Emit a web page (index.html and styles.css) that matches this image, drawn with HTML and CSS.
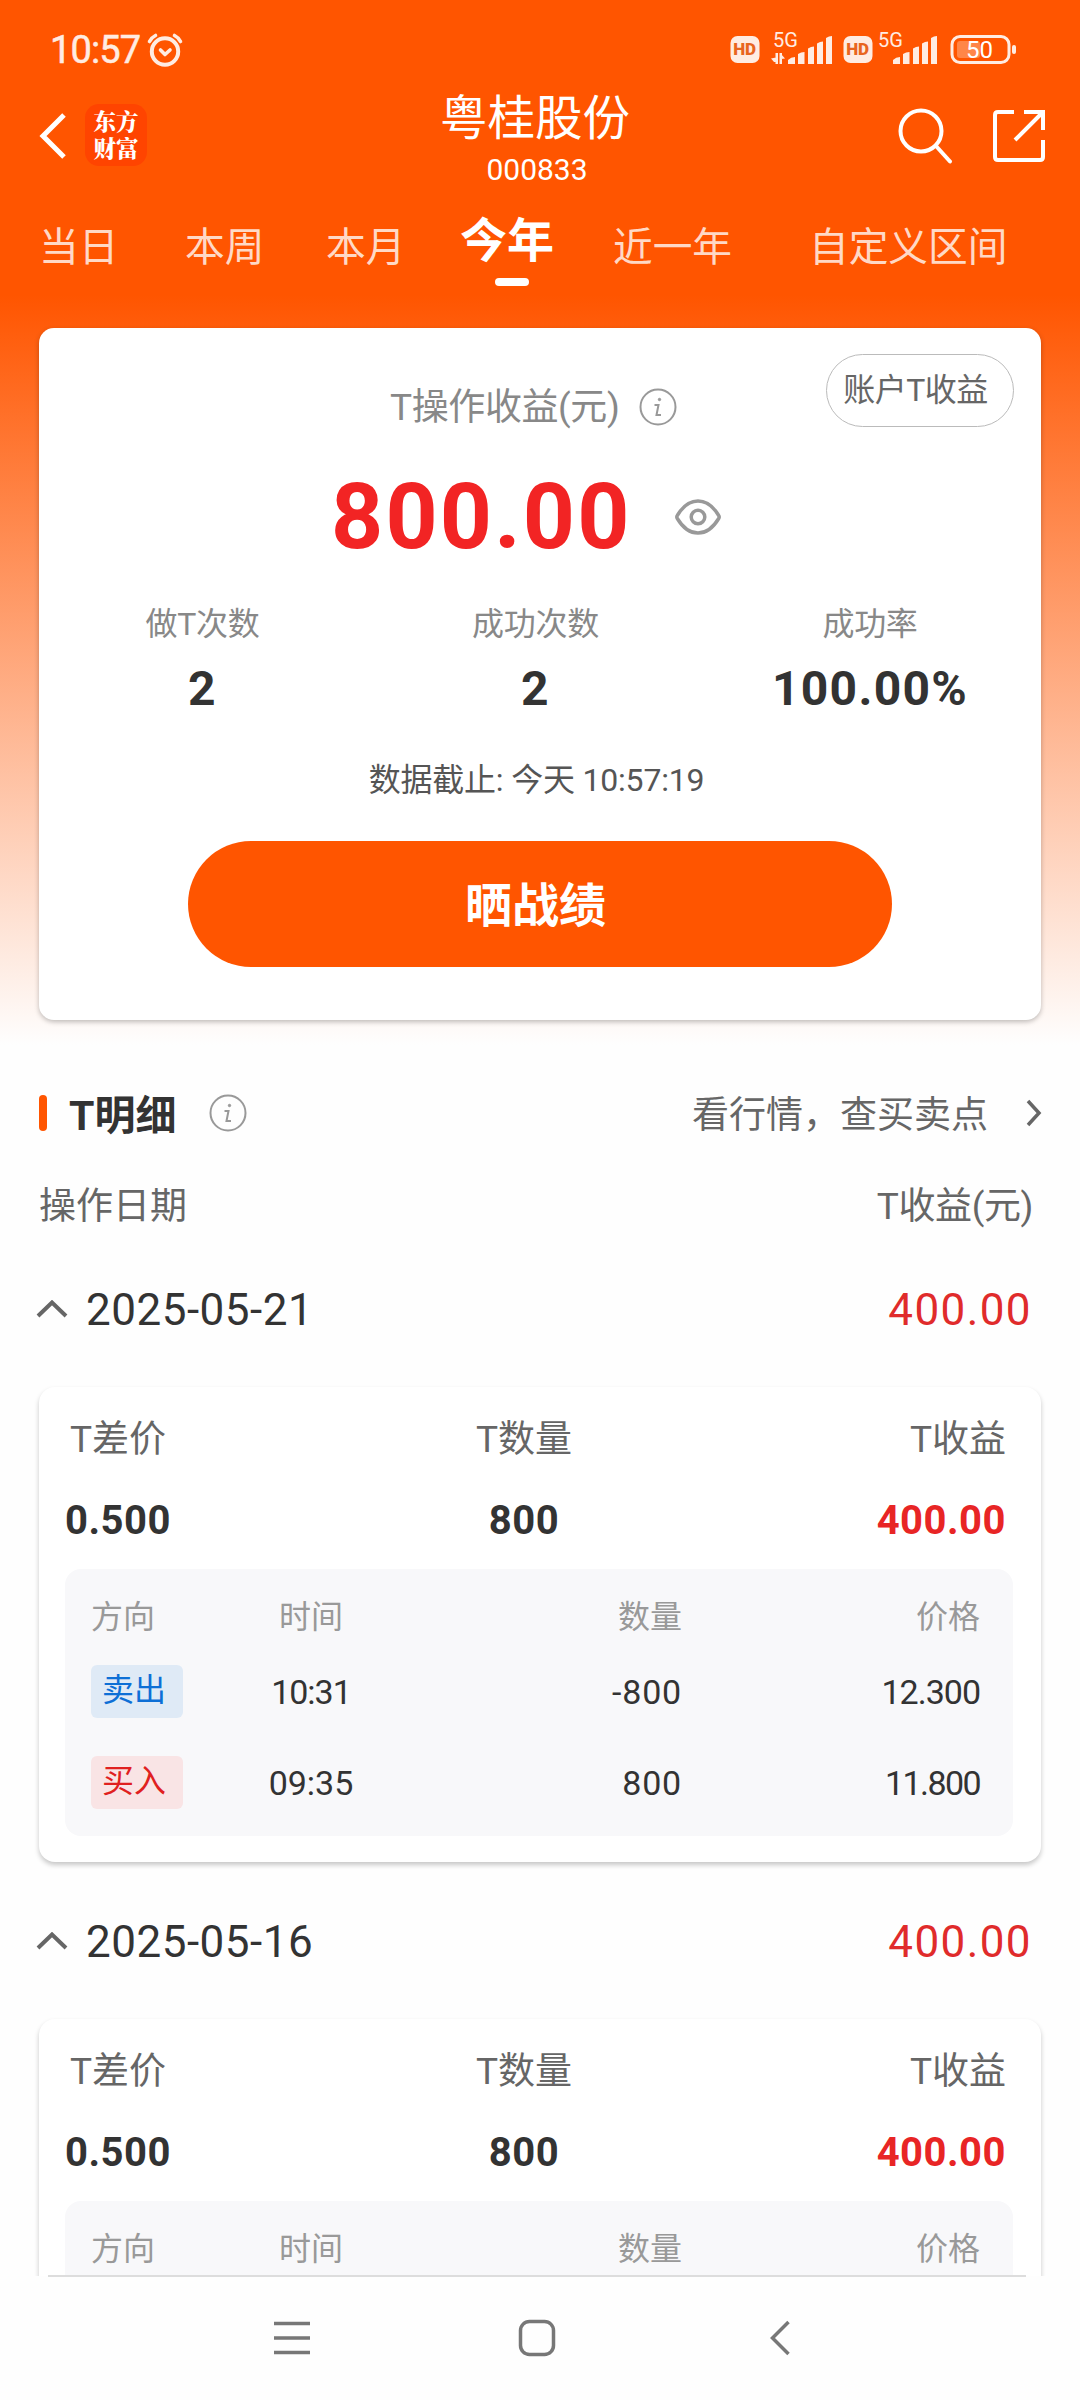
FILE: index.html
```html
<!DOCTYPE html>
<html lang="zh-CN">
<head>
<meta charset="utf-8">
<title>粤桂股份 000833</title>
<link rel="stylesheet" href="styles.css">
</head>
<body>
<div class="screen">
  <header class="top">
    <div class="status">
      <span class="clock">10:57</span>
      <svg class="alarm" width="38" height="38" viewBox="0 0 38 38" fill="none" stroke="#ffece2" stroke-width="4" stroke-linecap="round" stroke-linejoin="round"><circle cx="19" cy="20.500" r="13.200"/><path d="M3.500 10.500Q5.500 6.500 9.500 4.500M34.500 10.500Q32.500 6.500 28.500 4.500M14.500 19l4.500 4.500 5-4.500" stroke-width="3.600"/></svg>
      <svg class="signals" width="290" height="48" viewBox="730 26 290 48" fill="#ffece2">
        <rect x="730.500" y="36" width="29" height="27" rx="7"/>
        <text class="hd" x="733.200" y="55">HD</text>
        <text class="net" x="773" y="46.500">5G</text>
        <path d="M775.500 64v-11h2.500v11zM771 58.500l5-1v4.500h-2zM779.500 64v-11h2.500v11zM781 54l4 4.500-4 .5z"/>
        <path d="M788 64v-4q3-3 7-3v7zM798 64V54q3-2 6.500-2v12zM808 64V48.500q3-2 6-2V64zM817 64V43.500q3-2 6-2V64zM826 64V38q3-2 6-2v28z"/>
        <rect x="843.500" y="36" width="29" height="27" rx="7"/>
        <text class="hd" x="846.200" y="55">HD</text>
        <text class="net" x="878" y="46.500">5G</text>
        <path d="M893 64v-4q3-3 7-3v7zM903 64V54q3-2 6.500-2v12zM913 64V48.500q3-2 6-2V64zM922 64V43.500q3-2 6-2V64zM931 64V38q3-2 6-2v28z"/>
        <rect x="952" y="36.500" width="57" height="26" rx="8" fill="none" stroke="#ffece2" stroke-width="3"/>
        <rect x="957" y="41" width="23" height="17" rx="3" fill="#ff8648"/>
        <rect x="1012" y="45" width="4" height="9" rx="2"/>
        <text class="bat" x="966" y="57.500">50</text>
      </svg>
    </div>
    <div class="titlebar">
      <svg class="back" width="30" height="50" viewBox="0 0 30 50" fill="none" stroke="#fff" stroke-width="5"><path d="M26 4L5 25l21 21"/></svg>
      <div class="logo"><span>东方</span><span>财富</span></div>
      <div class="title"><h1>粤桂股份</h1><p>000833</p></div>
      <svg class="search" width="60" height="60" viewBox="0 0 60 60" fill="none" stroke="#fff" stroke-width="4" stroke-linecap="round"><circle cx="26" cy="26" r="20.500"/><path d="M41 41l14 15.500"/></svg>
      <svg class="share" width="54" height="54" viewBox="0 0 54 54" fill="none" stroke="#fff" stroke-width="4"><path d="M22 3H6Q3 3 3 6v42q0 3 3 3h42q3 0 3-3V31M32 3h19v18M50 4L23 31"/></svg>
    </div>
    <nav class="tabs">
      <span>当日</span><span>本周</span><span>本月</span><span class="active">今年</span><span>近一年</span><span>自定义区间</span>
    </nav>
  </header>

  <section class="summary">
    <button class="account">账户T收益</button>
    <div class="caption"><span>T操作收益(元)</span>
      <svg width="38" height="38" viewBox="0 0 38 38" fill="none" stroke="#999" stroke-width="2"><circle cx="19" cy="19" r="17.500"/><path d="M15.500 17h4l-2 10h4.500"/><circle cx="20.500" cy="11.500" r="1.200" fill="#999" stroke-width="1"/></svg>
    </div>
    <div class="total"><strong>800.00</strong>
      <svg width="48" height="38" viewBox="0 0 48 38" fill="none" stroke="#999" stroke-width="3.500"><path d="M3.300 20.500Q2.300 19 3.300 17.500 12 3 24 3t20.700 14.500q1 1.500 0 3Q36 35 24 35T3.300 20.500z"/><circle cx="24" cy="19" r="6.800"/></svg>
    </div>
    <dl class="stats">
      <div><dt>做T次数</dt><dd>2</dd></div>
      <div><dt>成功次数</dt><dd>2</dd></div>
      <div><dt>成功率</dt><dd>100.00%</dd></div>
    </dl>
    <p class="asof">数据截止: 今天 10:57:19</p>
    <button class="share-btn">晒战绩</button>
  </section>

  <div class="section-head">
    <i class="bar"></i><h2>T明细</h2>
    <svg width="38" height="38" viewBox="0 0 38 38" fill="none" stroke="#999" stroke-width="2"><circle cx="19" cy="19" r="17.500"/><path d="M15.500 17h4l-2 10h4.500"/><circle cx="20.500" cy="11.500" r="1.200" fill="#999" stroke-width="1"/></svg>
    <span class="link">看行情，查买卖点</span>
    <svg class="chev" width="16" height="28" viewBox="0 0 16 28" fill="none" stroke="#666" stroke-width="3.500"><path d="M2 2l11 12L2 26"/></svg>
  </div>
  <div class="list-head"><span>操作日期</span><span>T收益(元)</span></div>

  <div class="day">
    <svg width="32" height="20" viewBox="0 0 32 20" fill="none" stroke="#666" stroke-width="4"><path d="M2 16L16 2.500 30 16"/></svg>
    <span>2025-05-21</span><b>400.00</b>
  </div>
  <article class="trade">
    <div class="heads"><span>T差价</span><span>T数量</span><span>T收益</span></div>
    <div class="nums"><span>0.500</span><span>800</span><span class="up">400.00</span></div>
    <div class="fills">
      <div class="fill labels"><span>方向</span><span>时间</span><span>数量</span><span>价格</span></div>
      <div class="fill"><em class="sell">卖出</em><span class="tight">10:31</span><span class="qty">-800</span><span class="tight">12.300</span></div>
      <div class="fill"><em class="buy">买入</em><span>09:35</span><span class="qty">800</span><span class="tighter">11.800</span></div>
    </div>
  </article>

  <div class="day">
    <svg width="32" height="20" viewBox="0 0 32 20" fill="none" stroke="#666" stroke-width="4"><path d="M2 16L16 2.500 30 16"/></svg>
    <span>2025-05-16</span><b>400.00</b>
  </div>
  <div class="clip">
    <article class="trade">
      <div class="heads"><span>T差价</span><span>T数量</span><span>T收益</span></div>
      <div class="nums"><span>0.500</span><span>800</span><span class="up">400.00</span></div>
      <div class="fills">
        <div class="fill labels"><span>方向</span><span>时间</span><span>数量</span><span>价格</span></div>
      </div>
    </article>
  </div>

  <footer class="sysnav">
    <svg width="40" height="40" viewBox="0 0 40 40" fill="none" stroke="#777" stroke-width="3.500"><path d="M2 5.500h36M2 20h36M2 34.500h36"/></svg>
    <svg width="40" height="40" viewBox="0 0 40 40" fill="none" stroke="#777" stroke-width="3.500"><rect x="3.500" y="3.500" width="33" height="33" rx="9"/></svg>
    <svg width="40" height="40" viewBox="0 0 40 40" fill="none" stroke="#777" stroke-width="3.500"><path d="M26.500 4l-16 16 16 16"/></svg>
  </footer>
</div>
</body>
</html>
```
FILE: styles.css
```css
* { box-sizing: border-box; margin: 0; padding: 0; }
body { font-family: Roboto, "Noto Sans CJK SC", sans-serif; background: #fefefe; color: #333; }
svg { display: block; flex: none; }
button { font: inherit; border: 0; }
.screen { width: 1080px; height: 2400px; overflow: hidden; display: flex; flex-direction: column; background: linear-gradient(#ff5500 0, #ff5500 295px, #fefefe 1045px); }
.screen > * { flex: none; }

.top { height: 328px; color: #fff; }
.status { height: 100px; padding: 0 60px 0 50px; display: flex; align-items: center; }
.clock { font-size: 38px; color: #ffece2; letter-spacing: -.9px; width: 96px; -webkit-text-stroke: .5px #ffece2; }
.signals { margin-left: auto; }
.hd { font: 900 17px Roboto, sans-serif; fill: #e8651f; letter-spacing: -.2px; }
.net { font: 400 20px Roboto, sans-serif; }
.bat { font: 400 24px Roboto, sans-serif; fill: #fff; }

.titlebar { height: 90px; display: flex; align-items: flex-start; padding-left: 38px; }
.back { margin-top: 11px; }
.logo { margin: 4px 0 0 17px; width: 62px; height: 62px; border-radius: 14px; background: #ff4400; font: 900 22.500px/27px Roboto, "Noto Serif CJK SC", "Noto Sans CJK SC", serif; text-align: center; padding-top: 5px; }
.logo span { display: block; }
.title { width: 300px; margin-left: 238px; text-align: center; }
.title h1 { font-size: 47.500px; font-weight: 400; line-height: 46px; margin-top: -4px; }
.title p { font-size: 30px; line-height: 36px; margin: 10px 0 0 4px; }
.search { margin: 5px 0 0 210px; }
.share { margin: 9px 0 0 37px; }

.tabs { height: 100px; padding-left: 39px; display: grid; grid-template-columns: 146px 141px 134px 153px 196px 1fr; font-size: 39.700px; line-height: 56px; color: #ffd9c6; padding-top: 30px; white-space: nowrap; }
.tabs .active { color: #fff; font-size: 47px; font-weight: 700; margin-top: -7px; width: 94px; }
.tabs .active::after { content: ""; display: block; width: 34px; height: 8px; border-radius: 4px; background: #fff; margin: 9px 0 0 35px; }

.summary { position: relative; width: 1002px; height: 692px; margin: 0 0 0 39px; border-radius: 15px; background: #fff; box-shadow: 0 2px 5px rgba(0,0,0,.25); padding-top: 52px; }
.account { position: absolute; top: 26px; right: 27px; width: 188px; height: 73px; border: 1px solid #bbb; border-radius: 37px; background: #fff; color: #666; font-size: 32px; line-height: 71px; letter-spacing: -.5px; padding-right: 9px; }
.caption { display: flex; align-items: center; height: 54px; padding-left: 351px; font-size: 37px; color: #888; gap: 20px; }
.caption span { letter-spacing: -.4px; width: 229px; white-space: nowrap; margin-top: -6px; }
.total { display: flex; align-items: center; height: 110px; margin-top: 28px; padding-left: 292px; color: #f22424; }
.total strong { font-size: 91px; width: 343px; letter-spacing: 2.200px; }
.stats { display: grid; grid-template-columns: 327px 339px 330px; margin-top: 27px; text-align: center; }
.stats dt { font-size: 32px; line-height: 50px; color: #888; letter-spacing: -.3px; }
.stats dd { font-size: 48px; font-weight: 700; line-height: 60px; margin-top: 10px; letter-spacing: 1.300px; }
.asof { margin-top: 37px; padding-right: 7px; text-align: center; font-size: 32px; line-height: 48px; color: #555; letter-spacing: -.2px; }
.share-btn { display: block; width: 704px; height: 126px; margin: 37px 0 0 149px; padding: 0 9px 5px 0; border-radius: 63px; background: #ff5500; color: #fff; font-size: 47px; font-weight: 700; }

.section-head { height: 60px; margin: 63px 38px 0 39px; display: flex; align-items: center; }
.bar { width: 8px; height: 36px; border-radius: 4px; background: #ff5500; }
.section-head h2 { font-size: 41px; font-weight: 700; margin: -3px 0 0 22px; width: 140px; }
.link { margin: -2px 0 0 auto; font-size: 37px; color: #666; }
.chev { margin-left: 38px; }
.list-head { height: 60px; margin: 30px 47px 0 39px; display: flex; justify-content: space-between; align-items: center; font-size: 37px; color: #666; }
.list-head :last-child { letter-spacing: -.4px; }
.day { height: 60px; margin: 47px 48px 47px 36px; display: flex; align-items: center; font-size: 44px; }
.day span { margin-left: 18px; letter-spacing: .5px; }
.day b { margin-left: auto; font-weight: 400; color: #e02b2b; letter-spacing: 1.400px; }

.trade { width: 1002px; height: 475px; margin-left: 39px; border-radius: 16px; background: #fff; box-shadow: 0 3px 5px rgba(0,0,0,.22); padding: 23px 28px 0 26px; }
.trade + .day { margin-top: 50px; }
.heads, .nums { display: grid; grid-template-columns: 359px 200px 1fr; text-align: center; padding-right: 7px; height: 60px; line-height: 60px; }
.heads { font-size: 37px; color: #666; }
.nums { font-size: 40px; font-weight: 700; margin-top: 21px; letter-spacing: .5px; }
.heads > :first-child, .nums > :first-child { text-align: left; }
.heads > :first-child { padding-left: 5px; }
.heads > :last-child, .nums > :last-child { text-align: right; }
.up { color: #e82525; }
.fills { height: 267px; margin-top: 18px; border-radius: 16px; background: #f8f8fa; padding: 0 33px 0 26px; }
.fill { display: grid; grid-template-columns: 160px 120px 1fr 298px; align-items: center; height: 91px; font-size: 34px; }
.fill:nth-child(2) { margin-top: -14px; }
.fill span { text-align: right; }
.fill span:nth-child(2) { text-align: center; }
.fill .qty { letter-spacing: .8px; }
.fill .tight { letter-spacing: -1px; }
.fill .tighter { letter-spacing: -1.600px; }
.labels { font-size: 32px; color: #999; }
.fill.labels span { margin-top: -2px; }
.labels span:first-child { text-align: left; }
.fill em { width: 92px; height: 53px; border-radius: 6px; font-style: normal; font-size: 32px; line-height: 50px; padding-left: 11px; }
.sell { background: #dfeaf6; color: #0d6fd6; }
.buy { background: #f9e4e5; color: #e02020; }

.clip { height: 259px; overflow: hidden; padding-top: 2px; margin-top: -2px; }
.sysnav { height: 126px; position: relative; background: #fefefe; display: flex; padding: 42px 0 0 272px; gap: 205px; }
.sysnav::before { content: ""; position: absolute; left: 48px; right: 54px; top: -1px; height: 2px; background: #ddd; }
```
